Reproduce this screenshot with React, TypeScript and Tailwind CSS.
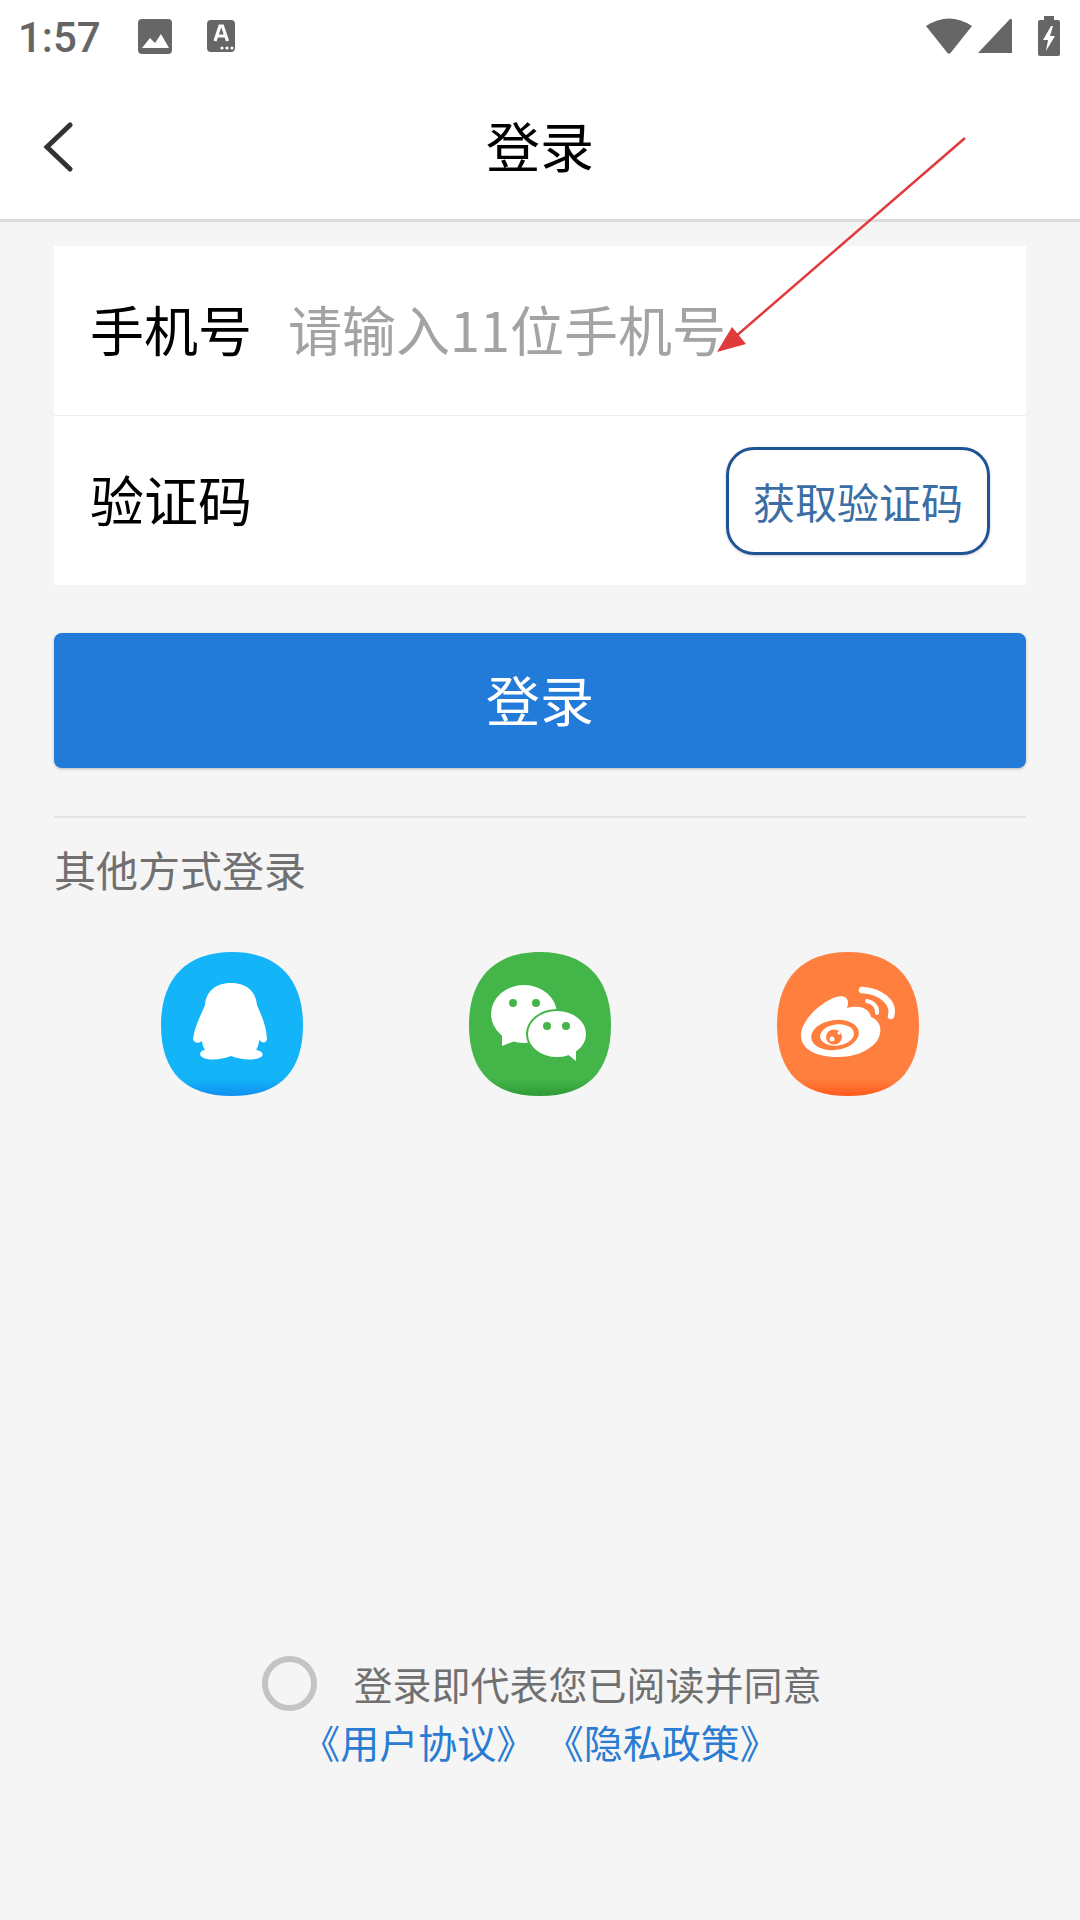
const cjk = "font-['Noto_Sans_CJK_SC','Liberation_Sans',sans-serif]"

const iconShape = 'M71 1 C118 1 142 29 142 74 C142 121 118 145 71 145 C24 145 0 121 0 74 C0 29 24 1 71 1 Z'

function StatusBar() {
  return (
    <div className="flex h-[72px] items-center justify-between bg-white pl-[18px] pr-[20px]">
      <div className="flex items-center">
        <span className="pt-[3px] font-['Roboto',sans-serif] text-[42px] font-medium leading-none text-[#666666]">1:57</span>
        <svg className="ml-[37px]" width="34" height="35" viewBox="0 0 34 35">
          <rect width="34" height="35" rx="4" fill="#666666" />
          <path d="M4 29 L12 19 L17 24 L23 15 L31 29 Z" fill="#ffffff" />
        </svg>
        <svg className="ml-[35px]" width="28" height="32" viewBox="0 0 28 32">
          <rect width="28" height="32" rx="4" fill="#666666" />
          <path d="M8 21 L13 6 H15.5 L20.5 21 M10 16 H18.5" stroke="#ffffff" strokeWidth="3.2" fill="none" />
          <circle cx="15" cy="28" r="1.6" fill="#ffffff" />
          <circle cx="20" cy="28" r="1.6" fill="#ffffff" />
          <circle cx="25" cy="28" r="1.6" fill="#ffffff" />
        </svg>
      </div>
      <div className="flex items-center">
        <svg width="46" height="38" viewBox="0 0 46 38">
          <path d="M0 9 Q23 -6 46 9 L24.500 36 Q23 37.500 21.500 36 Z" fill="#666666" />
        </svg>
        <svg className="ml-[6px]" width="34" height="36" viewBox="0 0 34 36">
          <path d="M0 35 L32 1 Q34 0 34 3 V35 Z" fill="#666666" />
        </svg>
        <svg className="ml-[26px]" width="22" height="40" viewBox="0 0 22 40">
          <path d="M6 0 H16 V4 H20 Q22 4 22 6 V38 Q22 40 20 40 H2 Q0 40 0 38 V6 Q0 4 2 4 H6 Z" fill="#666666" />
          <path d="M13 10 L5 24 H10 L8 35 L17 20 H12 L15 10 Z" fill="#ffffff" />
        </svg>
      </div>
    </div>
  )
}

function QqIcon() {
  return (
    <svg className="blur-[0.6px]" width="142" height="146" viewBox="0 0 142 146">
      <defs>
        <linearGradient id="qq" x1="0" y1="0" x2="0" y2="1">
          <stop offset="0.88" stopColor="#14b4f8" />
          <stop offset="1" stopColor="#0f8ff0" />
        </linearGradient>
      </defs>
      <path d={iconShape} fill="url(#qq)" />
      <path d="M70 32 C87 32 95 42 96 54 C99 62 105 72 106 88 C105 93 101 92 98 89 C98 92 97 96 95 99 C102 100 103 104 100 106 C93 110 80 109 70 105 C60 109 47 110 41 106 C38 104 38 100 44 99 C42 96 41 92 41 90 C37 93 33 92 32 88 C34 74 41 62 44 54 C45 42 53 32 70 32 Z" fill="#ffffff" />
    </svg>
  )
}

function WechatIcon() {
  return (
    <svg className="blur-[0.6px]" width="142" height="146" viewBox="0 0 142 146">
      <defs>
        <linearGradient id="wx" x1="0" y1="0" x2="0" y2="1">
          <stop offset="0.88" stopColor="#44b549" />
          <stop offset="1" stopColor="#2e9a34" />
        </linearGradient>
      </defs>
      <path d={iconShape} fill="url(#wx)" />
      <g transform="translate(1 2)">
        <ellipse cx="54" cy="61" rx="33" ry="29" fill="#ffffff" />
        <path d="M32 78 L32 93 L50 86 Z" fill="#ffffff" />
        <circle cx="43" cy="50" r="4" fill="#44b549" />
        <circle cx="66" cy="50" r="4" fill="#44b549" />
        <ellipse cx="87" cy="81" rx="30" ry="24" fill="#ffffff" stroke="#44b549" strokeWidth="2" />
        <path d="M96 100 L106 108 L106 96 Z" fill="#ffffff" />
        <circle cx="77" cy="73" r="4" fill="#44b549" />
        <circle cx="96" cy="73" r="4" fill="#44b549" />
      </g>
    </svg>
  )
}

function WeiboIcon() {
  return (
    <svg className="blur-[0.6px]" width="142" height="146" viewBox="0 0 142 146">
      <defs>
        <linearGradient id="wb" x1="0" y1="0" x2="0" y2="1">
          <stop offset="0.88" stopColor="#ff7f3f" />
          <stop offset="1" stopColor="#ff5a1c" />
        </linearGradient>
      </defs>
      <path d={iconShape} fill="url(#wb)" />
      <path d="M54 48 C66 42 74 46 70 57 C80 54 92 56 94 66 C104 70 106 80 100 90 C90 102 76 106 60 106 C42 106 24 100 24 84 C24 72 38 56 54 48 Z" fill="#ffffff" />
      <ellipse cx="58" cy="84" rx="24" ry="15" fill="#ff7f3f" transform="rotate(-8 58 84)" />
      <ellipse cx="60" cy="84" rx="17" ry="10.500" fill="#ffffff" transform="rotate(-8 60 84)" />
      <ellipse cx="57" cy="86" rx="8" ry="7.500" fill="#ff7f3f" />
      <circle cx="55" cy="88" r="2.500" fill="#ffffff" />
      <circle cx="62" cy="82" r="1.500" fill="#ffffff" />
      <path d="M85 39 C104 40 118 52 114 65" stroke="#ffffff" strokeWidth="6.500" strokeLinecap="round" fill="none" />
      <path d="M90 50 C96 51 101 56 100 62" stroke="#ffffff" strokeWidth="4" strokeLinecap="round" fill="none" />
    </svg>
  )
}

export default function App() {
  return (
    <div className={`relative flex h-[1920px] w-[1080px] flex-col overflow-hidden bg-[#f5f5f5] ${cjk}`}>
      <StatusBar />

      <div className="relative flex h-[150px] items-center justify-center border-b-[3px] border-[#dcdcdc] bg-white pb-[2px]">
        <svg className="absolute left-[42px] top-[50px]" width="32" height="50" viewBox="0 0 32 50">
          <path d="M28 3 L5 25 L28 47" stroke="#333333" strokeWidth="5" strokeLinecap="round" fill="none" />
        </svg>
        <span className="text-[54px] leading-none text-black">登录</span>
      </div>

      <div className="mx-[54px] mt-[24px] bg-white">
        <div className="flex h-[170px] items-center border-b border-[#eeeeee] pb-[4px] pl-[36px]">
          <span className="text-[54px] leading-none text-black">手机号</span>
          <span className="ml-[36px] text-[54px] leading-none text-[#a3a3a3]">请输入11位手机号</span>
        </div>
        <div className="flex h-[169px] items-center justify-between pl-[36px] pr-[36px]">
          <span className="pb-[4px] text-[54px] leading-none text-black">验证码</span>
          <div className="flex h-[108px] w-[264px] items-center justify-center rounded-[28px] border-[3px] border-[#1f5398] bg-white text-[42px] leading-none text-[#3a6ea5] shadow-[0_1px_3px_rgba(0,0,0,0.2)]">
            获取验证码
          </div>
        </div>
      </div>

      <div className="mx-[54px] mt-[48px] flex h-[135px] items-center justify-center rounded-[8px] bg-[#227bd9] pb-[4px] text-[54px] leading-none text-white shadow-[0_1px_3px_rgba(0,0,0,0.25)]">
        登录
      </div>

      <div className="mx-[54px] mt-[48px] border-t-2 border-[#e2e2e2] pt-[23px] text-[42px] leading-[56px] text-[#707070]">
        其他方式登录
      </div>

      <div className="mx-[161px] mt-[54px] flex justify-between">
        <QqIcon />
        <WechatIcon />
        <WeiboIcon />
      </div>

      <div className="mt-[557px] flex flex-col items-center text-[39px] leading-[58px]">
        <div className="flex items-center pl-[4px]">
          <div className="h-[55px] w-[55px] rounded-full border-[6px] border-[#c4c4c4]" />
          <span className="ml-[36px] text-[#707070]">登录即代表您已阅读并同意</span>
        </div>
        <div className="text-[#2a7cd3]">
          <span>《用户协议》</span>
          <span className="ml-[29px]">《隐私政策》</span>
        </div>
      </div>

      {/* red annotation arrow over the form */}
      <svg className="absolute left-0 top-0" width="1080" height="400" viewBox="0 0 1080 400">
        <line x1="965" y1="138" x2="735" y2="337" stroke="#e03a3a" strokeWidth="2.500" />
        <path d="M717 352 L732 327 L746 344 Z" fill="#e03a3a" />
      </svg>
    </div>
  )
}
